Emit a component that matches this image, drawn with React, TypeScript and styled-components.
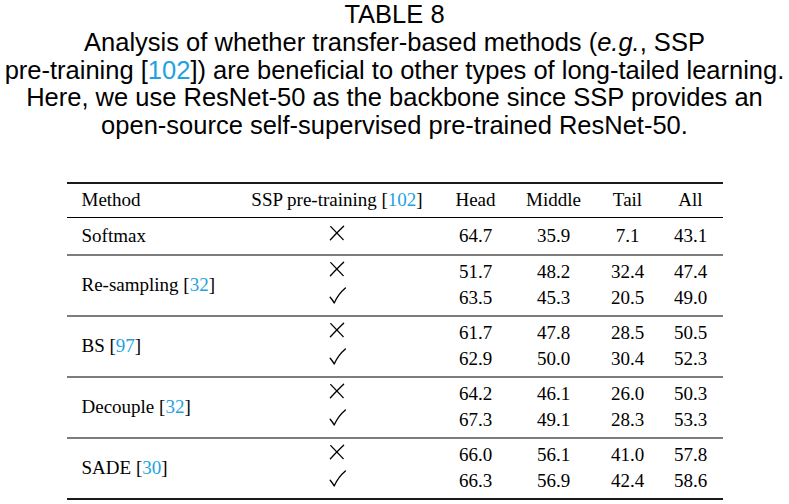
import React from "react";
import styled, { createGlobalStyle } from "styled-components";

const Global = createGlobalStyle`
  html, body { margin: 0; padding: 0; background: #ffffff; }
  body { width: 789px; height: 504px; overflow: hidden; }
`;

const Page = styled.div`
  width: 789px;
  display: flex;
  flex-direction: column;
  align-items: center;
`;

const Caption = styled.div`
  padding-top: 1px;
  font-family: "Liberation Sans", Arial, sans-serif;
  font-size: 25.5px;
  line-height: 27.75px;
  color: #000;
  text-align: center;
`;

const CaptionLine = styled.div`
  white-space: nowrap;
`;

const Cite = styled.span`
  color: #1ea2e2;
`;

const COLS = "167px 207px 70px 86px 62px 64px";

const Table = styled.div`
  margin-top: 42px;
  width: 656px;
  font-family: "Liberation Serif", "Times New Roman", serif;
  font-size: 19px;
  color: #000;
  border-bottom: 2px solid #1a1a1a;
`;

const HeaderRow = styled.div`
  display: grid;
  grid-template-columns: ${COLS};
  height: 33px;
  align-items: center;
  border-top: 2px solid #1a1a1a;
  border-bottom: 1px solid #000;
`;

const SingleRow = styled.div`
  display: grid;
  grid-template-columns: ${COLS};
  height: 36px;
  align-items: center;
`;

const Group = styled.div`
  display: grid;
  grid-template-columns: ${COLS};
  grid-template-rows: 26px 26px;
  padding: 3px 0 4px;
  align-items: center;
  border-top: 2px solid #7d7d7d;
`;

const MethodCell = styled.div<{ $span?: boolean }>`
  padding-left: 15px;
  white-space: nowrap;
  line-height: 26px;
  ${(p) => (p.$span ? "grid-row: 1 / span 2; grid-column: 1;" : "")}
`;

const Cell = styled.div`
  text-align: center;
  white-space: nowrap;
  line-height: 26px;
`;

const MarkCell = styled.div`
  display: flex;
  justify-content: center;
  align-items: center;
  height: 26px;
  grid-column: 2;
`;

const MarkSvg = styled.svg`
  display: block;
  margin-top: -5px;
  overflow: visible;
`;

const Cross = () => (
  <MarkSvg width="16" height="16" viewBox="0 0 16 16" fill="none" stroke="#000" strokeWidth="1.35" strokeLinecap="round">
    <path d="M1.8 1.6 L14.2 14.6" />
    <path d="M14.6 1.2 C12.2 3.6 5.5 10.2 1.4 14.8" />
  </MarkSvg>
);

const Check = () => (
  <MarkSvg width="17" height="17" viewBox="0 0 17 17" fill="none" stroke="#000" strokeWidth="1.35" strokeLinecap="round" strokeLinejoin="round">
    <path d="M1.2 10.2 C2.6 11.8 4 13.8 5.2 16 C7.6 10.6 11.6 5 16.4 1" />
  </MarkSvg>
);

type Row = { mark: "x" | "c"; vals: string[] };
type GroupData = { name: string; cite: string; rows: Row[] };

const groups: GroupData[] = [
  {
    name: "Re-sampling",
    cite: "32",
    rows: [
      { mark: "x", vals: ["51.7", "48.2", "32.4", "47.4"] },
      { mark: "c", vals: ["63.5", "45.3", "20.5", "49.0"] },
    ],
  },
  {
    name: "BS",
    cite: "97",
    rows: [
      { mark: "x", vals: ["61.7", "47.8", "28.5", "50.5"] },
      { mark: "c", vals: ["62.9", "50.0", "30.4", "52.3"] },
    ],
  },
  {
    name: "Decouple",
    cite: "32",
    rows: [
      { mark: "x", vals: ["64.2", "46.1", "26.0", "50.3"] },
      { mark: "c", vals: ["67.3", "49.1", "28.3", "53.3"] },
    ],
  },
  {
    name: "SADE",
    cite: "30",
    rows: [
      { mark: "x", vals: ["66.0", "56.1", "41.0", "57.8"] },
      { mark: "c", vals: ["66.3", "56.9", "42.4", "58.6"] },
    ],
  },
];

export default function App() {
  return (
    <>
      <Global />
      <Page>
        <Caption>
          <CaptionLine>TABLE 8</CaptionLine>
          <CaptionLine>
            Analysis of whether transfer-based methods (<i>e.g.</i>, SSP
          </CaptionLine>
          <CaptionLine>
            pre-training [<Cite>102</Cite>]) are beneficial to other types of long-tailed learning.
          </CaptionLine>
          <CaptionLine>Here, we use ResNet-50 as the backbone since SSP provides an</CaptionLine>
          <CaptionLine>open-source self-supervised pre-trained ResNet-50.</CaptionLine>
        </Caption>
        <Table>
          <HeaderRow>
            <MethodCell>Method</MethodCell>
            <Cell>
              SSP pre-training [<Cite>102</Cite>]
            </Cell>
            <Cell>Head</Cell>
            <Cell>Middle</Cell>
            <Cell>Tail</Cell>
            <Cell>All</Cell>
          </HeaderRow>
          <SingleRow>
            <MethodCell>Softmax</MethodCell>
            <MarkCell>
              <Cross />
            </MarkCell>
            <Cell>64.7</Cell>
            <Cell>35.9</Cell>
            <Cell>7.1</Cell>
            <Cell>43.1</Cell>
          </SingleRow>
          {groups.map((g) => (
            <Group key={g.name}>
              <MethodCell $span>
                {g.name} [<Cite>{g.cite}</Cite>]
              </MethodCell>
              {g.rows.map((r, i) => (
                <React.Fragment key={i}>
                  <MarkCell>{r.mark === "x" ? <Cross /> : <Check />}</MarkCell>
                  {r.vals.map((v, j) => (
                    <Cell key={j}>{v}</Cell>
                  ))}
                </React.Fragment>
              ))}
            </Group>
          ))}
        </Table>
      </Page>
    </>
  );
}
